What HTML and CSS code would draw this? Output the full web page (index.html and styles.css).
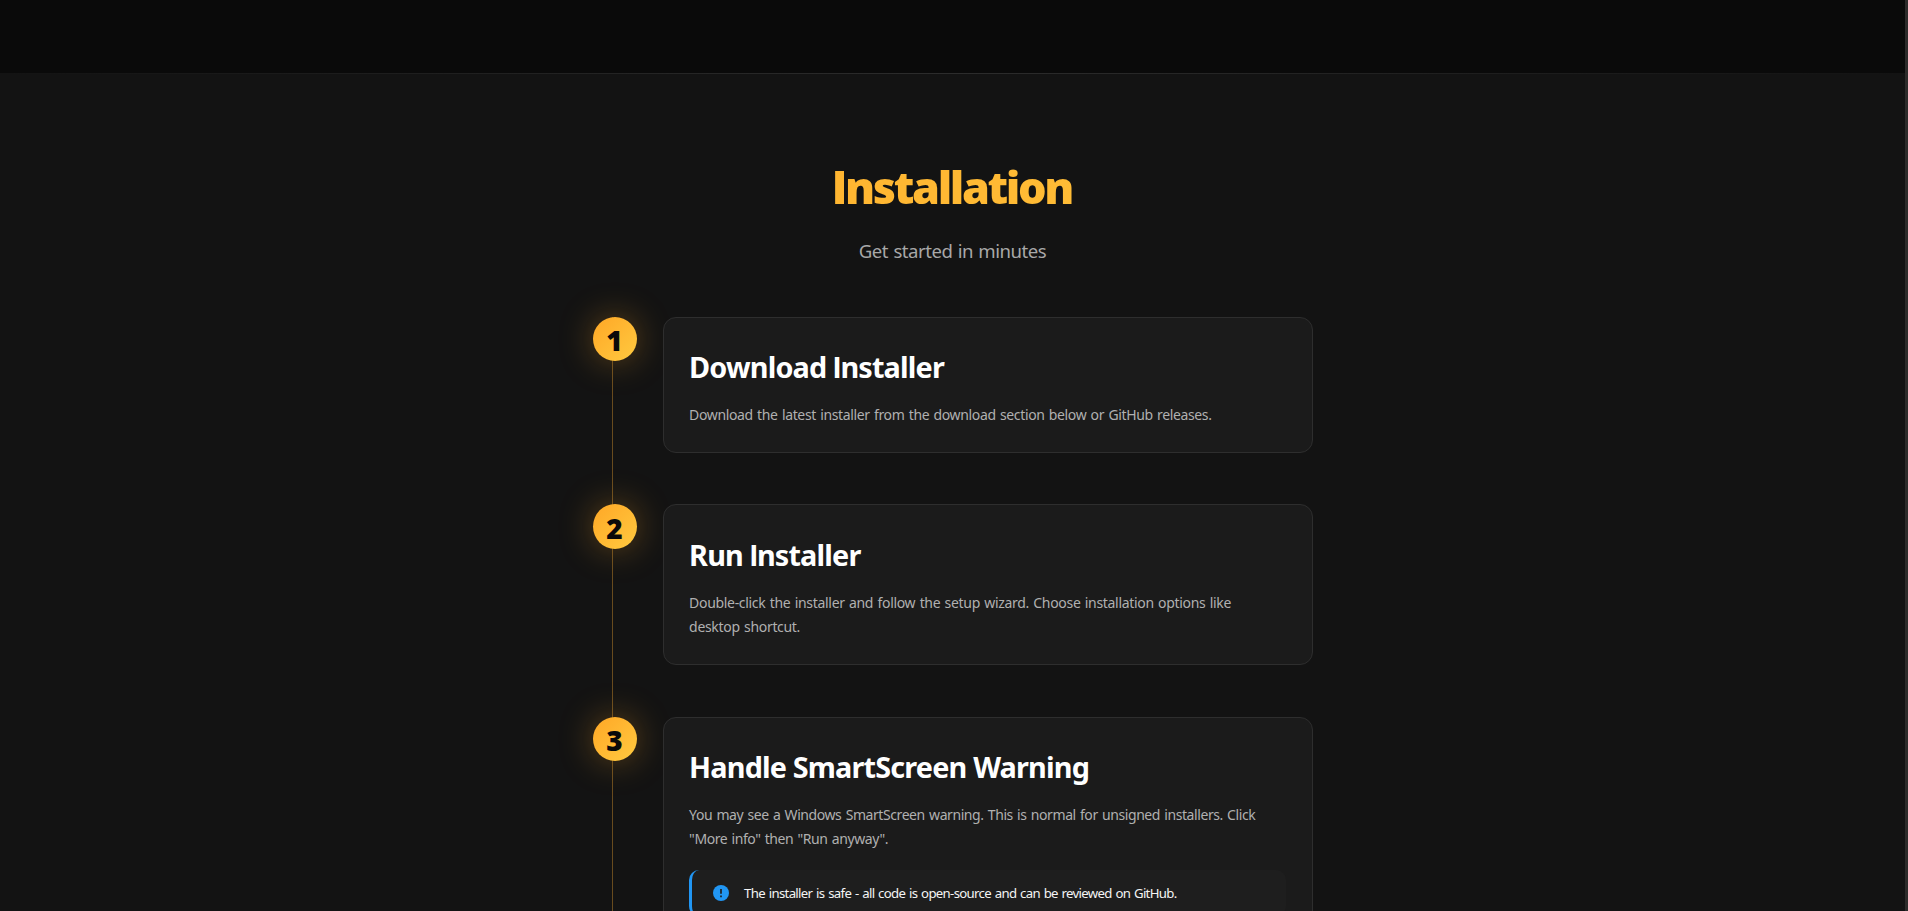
FILE: index.html
```
<!DOCTYPE html>
<html lang="en">
<head>
<meta charset="utf-8">
<title>Installation</title>
<link rel="stylesheet" href="styles.css">
</head>
<body>
<div class="previous"></div>
<section class="install">
  <header class="heading">
    <h2 class="title"><span class="plain">I</span>nstallation</h2>
    <p class="subtitle">Get started in minutes</p>
  </header>
  <div class="timeline">
    <article class="step">
      <div class="number">1</div>
      <div class="card">
        <h3>Download <span class="plain">I</span>nstaller</h3>
        <p class="text">Download the latest installer from the download section below or GitHub releases.</p>
      </div>
    </article>
    <article class="step run">
      <div class="number">2</div>
      <div class="card">
        <h3>Run <span class="plain">I</span>nstaller</h3>
        <p class="text">Double-click the installer and follow the setup wizard. Choose installation options like<br>desktop shortcut.</p>
      </div>
    </article>
    <article class="step">
      <div class="number">3</div>
      <div class="card">
        <h3>Handle SmartScreen Warning</h3>
        <p class="text tight">You may see a Windows SmartScreen warning. This is normal for unsigned installers. Click<br>"More info" then "Run anyway".</p>
        <div class="note">
          <svg class="note-icon" viewBox="0 0 16 16"><circle cx="8" cy="8" r="8" fill="#2196f3"/><path d="M8 4v4.7" stroke="#1e1e1e" stroke-width="1.7"/><path d="M8 10.4v1.8" stroke="#1e1e1e" stroke-width="1.7"/></svg>
          <span>The installer is safe - all code is open-source and can be reviewed on GitHub.</span>
        </div>
      </div>
    </article>
  </div>
</section>
<div class="scrollbar"></div>
</body>
</html>
```
FILE: styles.css
```
* { box-sizing: border-box; margin: 0; padding: 0; }
html, body { height: 911px; overflow: hidden; }
body { background: #0a0a0a; font-family: "Noto Sans", "Open Sans", sans-serif; color: #fff; }
.previous { height: 73px; }
.install { position: relative; width: 1905px; height: 838px; overflow: hidden; padding-top: 79px; background: #131313; }
.install::before { content: ""; position: absolute; top: 0; left: 0; right: 0; height: 1px; background: linear-gradient(90deg, transparent, #2c2c2c, transparent); }
.heading { height: 165px; text-align: center; }
.title {
  width: max-content; margin: 0 auto; font-size: 45px; line-height: 70px; font-weight: 900; letter-spacing: -2.4px;
  background: linear-gradient(135deg, #ffa726, #ffca40); background-size: 1400px 100%; background-position: 50% 0;
  -webkit-background-clip: text; background-clip: text; color: transparent;
}
.plain { font-family: Inter, "Liberation Sans", sans-serif; line-height: 1; }
.title .plain { margin-right: 1.5px; }
.subtitle { margin-top: 13px; font-size: 18.6px; line-height: 32px; font-weight: 400; letter-spacing: -.49px; word-spacing: 1px; color: #a8a8a8; }
.timeline { position: relative; width: 720px; margin: 0 auto; }
.timeline::before { content: ""; position: absolute; left: 19.5px; top: 0; width: 1px; height: 800px; background: #684b1e; }
.step { position: relative; display: flex; align-items: flex-start; gap: 26px; margin-bottom: 51px; }
.number {
  flex: none; width: 44px; height: 44px; border-radius: 50%; background: linear-gradient(135deg, #ffa726, #ffca40);
  box-shadow: 0 0 34px rgba(255, 167, 38, .34); color: #0a0a0a;
  font-size: 28px; font-weight: 900; line-height: 46px; text-align: center;
}
.card { width: 650px; padding: 26px 25.6px 25px; background: #1b1b1b; border: 1px solid #2e2e2e; border-radius: 13px; }
h3 { font-size: 28.8px; line-height: 46px; font-weight: 700; letter-spacing: -.82px; margin-bottom: 13px; white-space: nowrap; }
.text { font-size: 14px; line-height: 24px; letter-spacing: -.36px; word-spacing: 1px; color: #b0b0b0; white-space: nowrap; }
.run { margin-bottom: 52px; }
.run .number { height: 45px; line-height: 48px; }
.run .card { padding-top: 27px; }
.run .text { letter-spacing: -.315px; }
.text.tight { letter-spacing: -.42px; }
.note {
  display: flex; align-items: center; gap: 15px; height: 46px; margin-top: 19px; padding-left: 21px;
  background: #1e1e1e; border-left: 3px solid #2196f3; border-radius: 10px;
  font-size: 13.2px; font-weight: 450; letter-spacing: -.68px; word-spacing: 1px; color: #f4f4f4; white-space: nowrap;
}
.note-icon { width: 16px; height: 16px; }
.scrollbar { position: absolute; top: 0; right: 0; width: 3px; height: 911px; background: #2d2c2b; }
```
